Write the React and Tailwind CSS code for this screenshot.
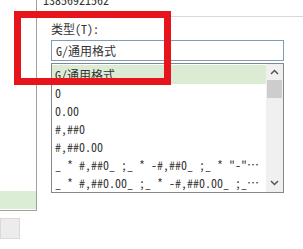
import React from 'react';

const rows = [
  '0',
  '0.00',
  '#,##0',
  '#,##0.00',
  '_ * #,##0_ ;_ * -#,##0_ ;_ * "-"_ ;_ @_ ',
  '_ * #,##0.00_ ;_ * -#,##0.00_ ;_ * "-"??_ ;_ @_ ',
];

const font = { fontFamily: '"Noto Sans Mono CJK SC", "DejaVu Sans Mono", "Noto Sans CJK SC", monospace' };

function App() {
  return (
    <div className="relative w-[303px] h-[249px] bg-white flex overflow-hidden text-[12px] text-[#222]" style={font}>
      {/* left panel */}
      <div className="w-[37px] flex flex-col shrink-0">
        <div className="h-[211px] border-r border-b border-[#a0a0a0] flex flex-col justify-end pb-[1px]">
          <div className="h-[18px] bg-[#dcedd5]" />
        </div>
        <div className="mt-[7px] w-[20px] h-[21px] bg-[#ececec] border border-[#dadada]" />
      </div>

      {/* right side */}
      <div className="flex-1 pl-[6px]">
        <div className="h-[17px] border-b border-[#d9d9d9] overflow-hidden">
          <div className="-mt-[8px] leading-[16px] text-[#333]">13856921562</div>
        </div>
        <div className="pl-[8px] pt-[5px] w-[241px]">
          <div className="leading-[14px] text-[#333]">类型(T):</div>
          <div className="mt-[4px] h-[21px] border border-[#7f9db9] flex items-center pl-[4px] text-[#333]">G/通用格式</div>
          <div className="mt-[2px] h-[130px] border border-[#828790] flex">
            <div className="flex-1 min-w-0 pt-[1px] overflow-hidden">
              <div className="h-[19px] bg-[#dcebd4] pl-[3px] leading-[19px] text-[#333]">G/通用格式</div>
              {rows.map((r) => (
                <div key={r} className="h-[18px] pl-[3px] pr-[4px] leading-[18px] whitespace-nowrap overflow-hidden text-ellipsis text-[#333]">
                  {r}
                </div>
              ))}
            </div>
            <div className="w-[17px] bg-[#f0f0f0] flex flex-col items-center">
              <div className="h-[16px] flex items-center justify-center">
                <svg width="9" height="6" viewBox="0 0 9 6"><path d="M1 5 L4.5 1.5 L8 5" fill="none" stroke="#555" strokeWidth="1.5" /></svg>
              </div>
              <div className="w-[15px] h-[18px] bg-[#cdcdcd]" />
              <div className="flex-1" />
              <div className="h-[18px] flex items-center justify-center">
                <svg width="9" height="6" viewBox="0 0 9 6"><path d="M1 1 L4.5 4.5 L8 1" fill="none" stroke="#555" strokeWidth="1.5" /></svg>
              </div>
            </div>
          </div>
        </div>
      </div>

      {/* red highlight overlay */}
      <div className="absolute left-[14px] top-[11px] w-[157px] h-[74px] border-[7px] border-[#e8141b]" />
    </div>
  );
}

export default App;
